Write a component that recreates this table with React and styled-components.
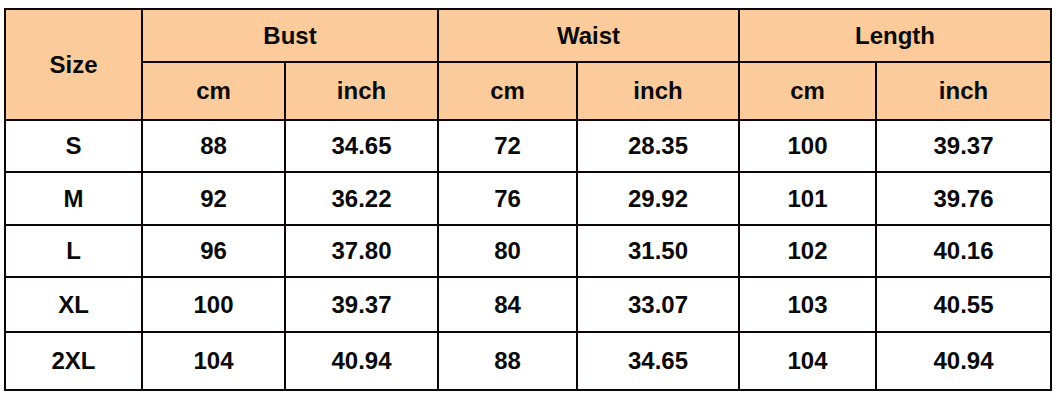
import React from "react";
import styled, { createGlobalStyle } from "styled-components";

const GlobalStyle = createGlobalStyle`
  html, body {
    margin: 0;
    padding: 0;
    background: #fff;
  }
`;

const Page = styled.div`
  width: 1062px;
  height: 405px;
  padding: 8px 0 0 4px;
  box-sizing: border-box;
  background: #fff;
`;

const Table = styled.table`
  border-collapse: collapse;
  table-layout: fixed;
  width: 1046px;
  font-family: "Liberation Sans", Arial, sans-serif;
  font-weight: 700;
  font-size: 24px;
  color: #0a0a0a;
`;

const Cell = styled.td`
  border: 2px solid #0d0606;
  text-align: center;
  vertical-align: middle;
  padding: 0;
  height: ${(p) => p.$h}px;
  background: ${(p) => (p.$head ? "#fbcb9b" : "#fff")};
`;

const widths = [137, 143, 153, 139, 162, 137, 175];

const rows = [
  ["S", "88", "34.65", "72", "28.35", "100", "39.37"],
  ["M", "92", "36.22", "76", "29.92", "101", "39.76"],
  ["L", "96", "37.80", "80", "31.50", "102", "40.16"],
  ["XL", "100", "39.37", "84", "33.07", "103", "40.55"],
  ["2XL", "104", "40.94", "88", "34.65", "104", "40.94"],
];

const rowHeights = [50, 51, 50, 53, 56];

export default function App() {
  return (
    <Page>
      <GlobalStyle />
      <Table>
        <colgroup>
          {widths.map((w, i) => (
            <col key={i} style={{ width: w }} />
          ))}
        </colgroup>
        <thead>
          <tr>
            <Cell as="th" $head $h={51} rowSpan={2}>
              Size
            </Cell>
            <Cell as="th" $head $h={51} colSpan={2}>
              Bust
            </Cell>
            <Cell as="th" $head $h={51} colSpan={2}>
              Waist
            </Cell>
            <Cell as="th" $head $h={51} colSpan={2}>
              Length
            </Cell>
          </tr>
          <tr>
            {["cm", "inch", "cm", "inch", "cm", "inch"].map((t, i) => (
              <Cell as="th" $head $h={56} key={i}>
                {t}
              </Cell>
            ))}
          </tr>
        </thead>
        <tbody>
          {rows.map((r, ri) => (
            <tr key={ri}>
              {r.map((v, ci) => (
                <Cell $h={rowHeights[ri]} key={ci}>
                  {v}
                </Cell>
              ))}
            </tr>
          ))}
        </tbody>
      </Table>
    </Page>
  );
}
